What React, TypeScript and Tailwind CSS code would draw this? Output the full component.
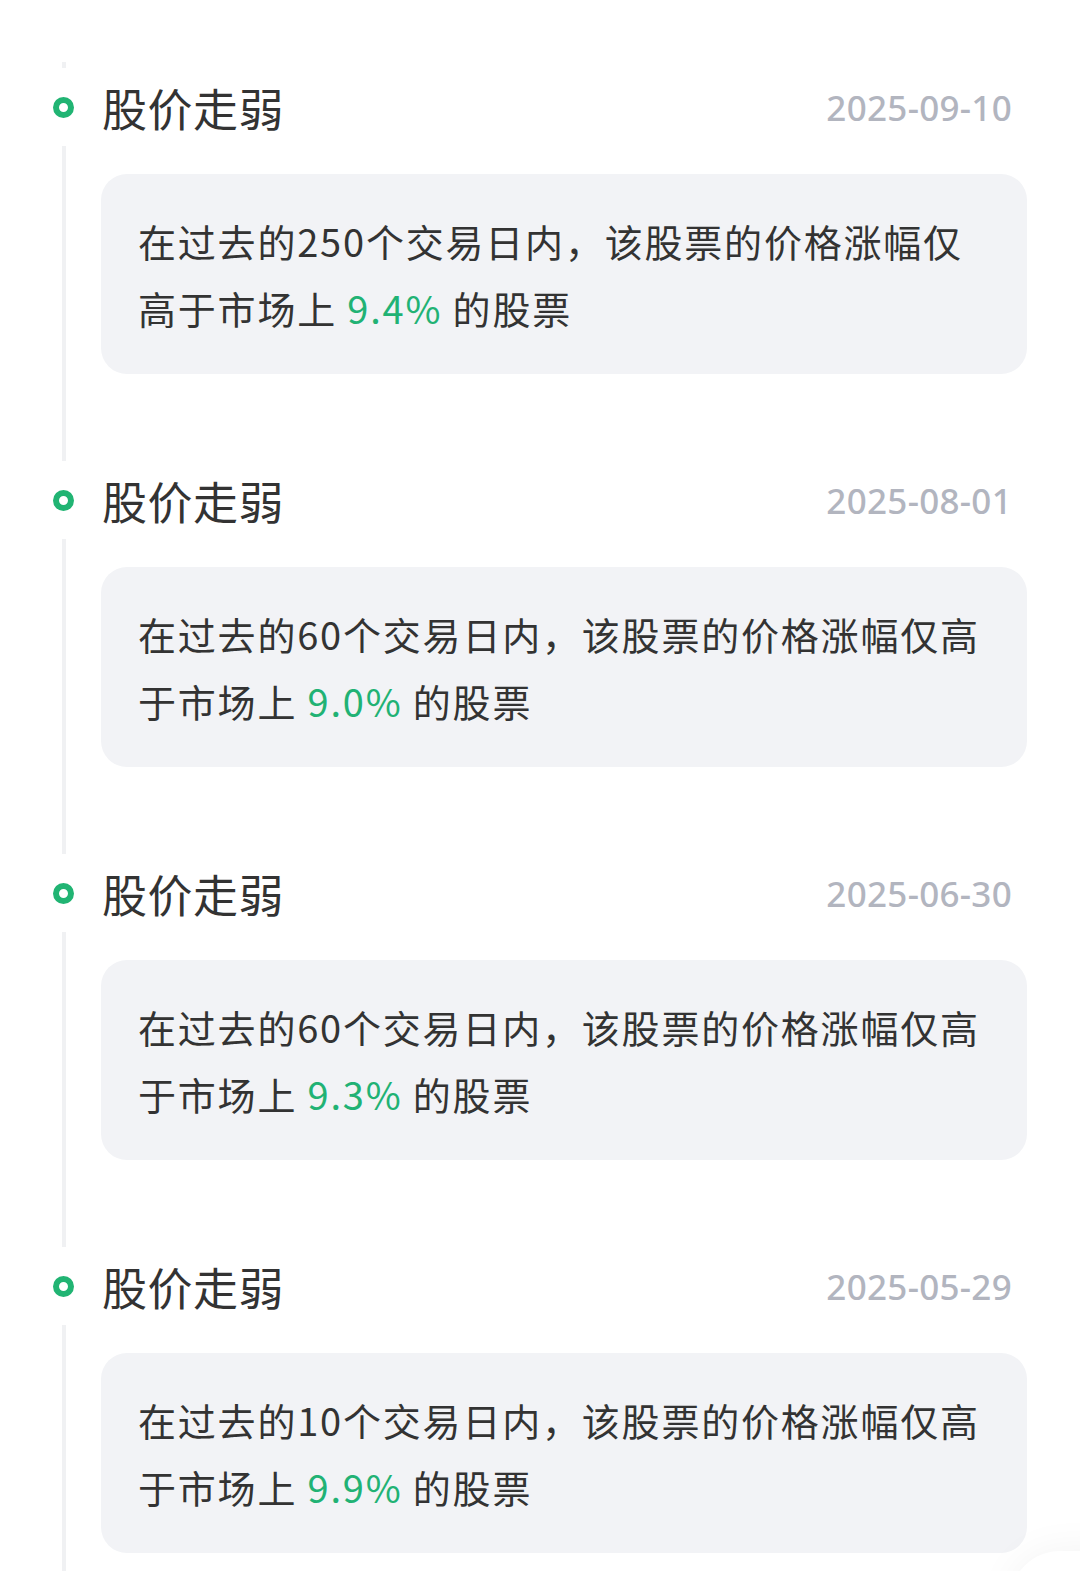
const items = [
  { date: '2025-09-10', days: '250', pct: '9.4%' },
  { date: '2025-08-01', days: '60', pct: '9.0%' },
  { date: '2025-06-30', days: '60', pct: '9.3%' },
  { date: '2025-05-29', days: '10', pct: '9.9%' },
];

function Dot() {
  return <div className="w-[21px] h-[21px] rounded-full border-[6px] border-[#21b473] bg-white" />;
}

export default function App() {
  return (
    <div className="relative w-[1080px] h-[1571px] overflow-hidden bg-white font-['Noto_Sans_CJK_SC',sans-serif]">
      <div className="flex flex-col pt-[62px] pl-[53px] pr-[53px]">
        {/* tail of the previous entry */}
        <div className="flex">
          <div className="w-[21px] flex justify-center">
            <div className="w-[4px] h-[6px] bg-[#f0f1f3]" />
          </div>
        </div>

        {items.map((item) => (
          <div key={item.date} className="flex flex-col">
            {/* Header */}
            <div className="flex items-center h-[78px]">
              <div className="w-[21px] flex justify-center">
                <Dot />
              </div>
              <div className="ml-[28px] flex-1 flex items-center justify-between">
                <span className="text-[45px] leading-none font-normal tracking-[0.5px] text-[#333333]">股价走弱</span>
                <span className="mr-[15px] font-['Noto_Sans',sans-serif] text-[35px] leading-none font-medium tracking-[0.3px] text-[#b2b5bf]">
                  {item.date}
                </span>
              </div>
            </div>

            {/* Body */}
            <div className="flex h-[315px]">
              <div className="w-[21px] flex justify-center">
                <div className="w-[4px] h-full bg-[#f0f1f3]" />
              </div>
              <div className="ml-[27px] flex-1 pt-[28px]">
                <div className="h-[200px] rounded-[26px] bg-[#f2f3f6] pl-[37px] pr-[30px] pt-[33px]">
                  <p className="text-[38px] leading-[67px] tracking-[1.8px] text-[#333333]">
                    在过去的{item.days}个交易日内，该股票的价格涨幅仅高于市场上{' '}
                    <span className="text-[#21b274]">{item.pct}</span> 的股票
                  </p>
                </div>
              </div>
            </div>
          </div>
        ))}
      </div>

      {/* faint floating shadow at bottom-right */}
      <div className="absolute right-[-80px] bottom-[-80px] w-[150px] h-[100px] rounded-full bg-white shadow-[0_0_40px_rgba(0,0,0,0.05)]" />
    </div>
  );
}
